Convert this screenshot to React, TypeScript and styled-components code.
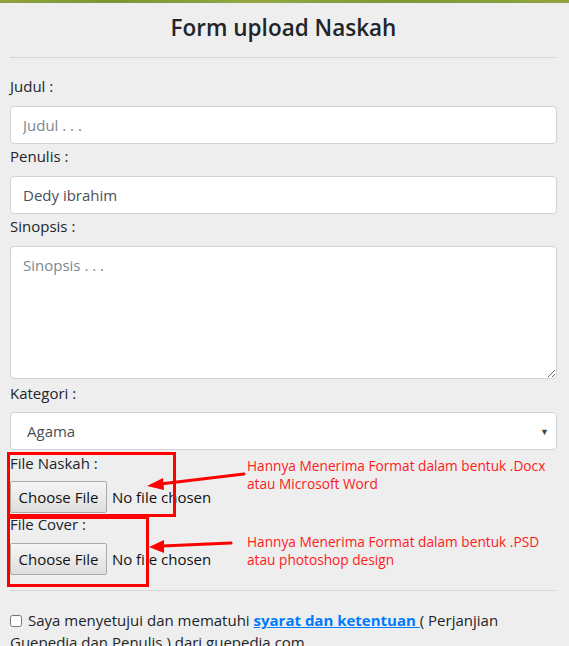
import React from "react";
import styled, { createGlobalStyle } from "styled-components";

const GlobalStyle = createGlobalStyle`
  html, body {
    margin: 0;
    padding: 0;
    background: #eeeeee;
  }
  body {
    font-family: "Open Sans", "Noto Sans", sans-serif;
    color: #212529;
  }
`;

const Page = styled.div`
  position: relative;
  min-height: 646px;
  overflow: hidden;
`;

const TopStrip = styled.div`
  height: 3px;
  background: linear-gradient(90deg, #8ea33f 0%, #7d9434 20%, #93a845 45%, #7f9636 70%, #90a541 100%);
`;

const Container = styled.div`
  padding: 0 12px 0 10px;
`;

const Title = styled.h2`
  margin: 0;
  height: 54px;
  box-sizing: border-box;
  padding-bottom: 6px;
  display: flex;
  align-items: center;
  justify-content: center;
  font-size: 22.5px;
  font-weight: 600;
  color: #212529;
`;

const Divider = styled.hr`
  margin: 0;
  border: 0;
  border-top: 1px solid #d6d6d6;
`;

const Form = styled.form`
  display: flex;
  flex-direction: column;
  padding-top: 17px;
`;

const Label = styled.label<{ $mb?: number }>`
  display: block;
  font-size: 15px;
  line-height: 22px;
  margin-bottom: ${(p) => p.$mb ?? 9}px;
`;

const Field = styled.div<{ $gap?: number }>`
  margin-bottom: ${(p) => p.$gap ?? 1}px;
`;

const Input = styled.input`
  display: block;
  box-sizing: border-box;
  width: 100%;
  height: 38px;
  padding: 0 12px;
  border: 1px solid #ced4da;
  border-radius: 4px;
  background: #fff;
  font-family: inherit;
  font-size: 15px;
  color: #495057;
  &::placeholder {
    color: #7d8790;
  }
`;

const TextArea = styled.textarea`
  display: block;
  box-sizing: border-box;
  width: 100%;
  height: 133px;
  padding: 8px 12px;
  border: 1px solid #ced4da;
  border-radius: 4px;
  background: #fff;
  font-family: inherit;
  font-size: 15px;
  color: #495057;
  resize: vertical;
  &::placeholder {
    color: #7d8790;
  }
`;

const SelectBox = styled.div`
  box-sizing: border-box;
  height: 38px;
  display: flex;
  align-items: center;
  padding: 0 16px;
  border: 1px solid #ced4da;
  border-radius: 4px;
  background: #fff;
  font-size: 15px;
  color: #495057;
`;

const Caret = styled.span`
  margin-left: auto;
  margin-right: -9px;
  font-size: 9px;
  color: #444;
`;

const FileRow = styled.div`
  display: flex;
  align-items: center;
  gap: 5px;
`;

const FileButton = styled.button`
  height: 32px;
  padding: 0 7.5px;
  border: 1px solid #a9a9a9;
  border-radius: 2px;
  background: linear-gradient(#f6f6f6, #dedede);
  font-family: inherit;
  font-size: 15px;
  color: #111;
`;

const FileName = styled.span`
  font-size: 15px;
  color: #111;
`;

const Agreement = styled.div`
  padding-top: 18px;
  font-size: 15px;
  line-height: 22px;
  color: #212529;
`;

const Check = styled.input`
  width: 12px;
  height: 12px;
  margin: 0 6px 0 0;
  vertical-align: -1px;
`;

const TermsLink = styled.a`
  color: #007bff;
  font-weight: 700;
  text-decoration: underline;
`;

const Box = styled.div<{ $x: number; $y: number; $w: number; $h: number }>`
  position: absolute;
  left: ${(p) => p.$x}px;
  top: ${(p) => p.$y}px;
  width: ${(p) => p.$w}px;
  height: ${(p) => p.$h}px;
  box-sizing: border-box;
  border: 3px solid #ff0000;
  pointer-events: none;
`;

const Note = styled.div<{ $x: number; $y: number }>`
  position: absolute;
  left: ${(p) => p.$x}px;
  top: ${(p) => p.$y}px;
  font-family: "Open Sans", "Liberation Sans", sans-serif;
  font-size: 13.7px;
  line-height: 18px;
  color: #ff1a1a;
  white-space: nowrap;
`;

const Arrows = styled.svg`
  position: absolute;
  left: 0;
  top: 0;
  pointer-events: none;
`;

function FakeFile() {
  return (
    <FileRow>
      <FileButton type="button">Choose File</FileButton>
      <FileName>No file chosen</FileName>
    </FileRow>
  );
}

export default function App() {
  return (
    <Page>
      <GlobalStyle />
      <TopStrip />
      <Container>
        <Title>Form upload Naskah</Title>
        <Divider />
        <Form>
          <Field>
            <Label>Judul :</Label>
            <Input placeholder="Judul . . ." />
          </Field>
          <Field>
            <Label>Penulis :</Label>
            <Input defaultValue="Dedy ibrahim" />
          </Field>
          <Field $gap={3}>
            <Label $mb={9}>Sinopsis :</Label>
            <TextArea placeholder="Sinopsis . . ." />
          </Field>
          <Field $gap={2}>
            <Label $mb={8}>Kategori :</Label>
            <SelectBox>
              Agama
              <Caret>▼</Caret>
            </SelectBox>
          </Field>
          <Field $gap={0}>
            <Label $mb={7}>File Naskah :</Label>
            <FakeFile />
          </Field>
          <Field $gap={15}>
            <Label $mb={8}>File Cover :</Label>
            <FakeFile />
          </Field>
          <Divider />
          <Agreement>
            <Check type="checkbox" />
            Saya menyetujui dan mematuhi{" "}
            <TermsLink href="#">syarat dan ketentuan </TermsLink>( Perjanjian
            Guepedia dan Penulis ) dari guepedia.com
          </Agreement>
        </Form>
      </Container>

      <Box $x={7} $y={452} $w={169} $h={65} />
      <Box $x={7} $y={516} $w={142} $h={71} />
      <Arrows width="569" height="646" viewBox="0 0 569 646">
        <g stroke="#ff0000" strokeWidth="3" fill="#ff0000" strokeLinecap="round">
          <line x1="244" y1="474" x2="160" y2="484" />
          <polygon points="147,486 163,478 164,490" stroke="none" />
          <line x1="231" y1="543" x2="162" y2="546" />
          <polygon points="149,547 164,540 164,553" stroke="none" />
        </g>
      </Arrows>
      <Note $x={247} $y={457}>
        Hannya Menerima Format dalam bentuk .Docx
        <br />
        atau Microsoft Word
      </Note>
      <Note $x={247} $y={533}>
        Hannya Menerima Format dalam bentuk .PSD
        <br />
        atau photoshop design
      </Note>
    </Page>
  );
}
